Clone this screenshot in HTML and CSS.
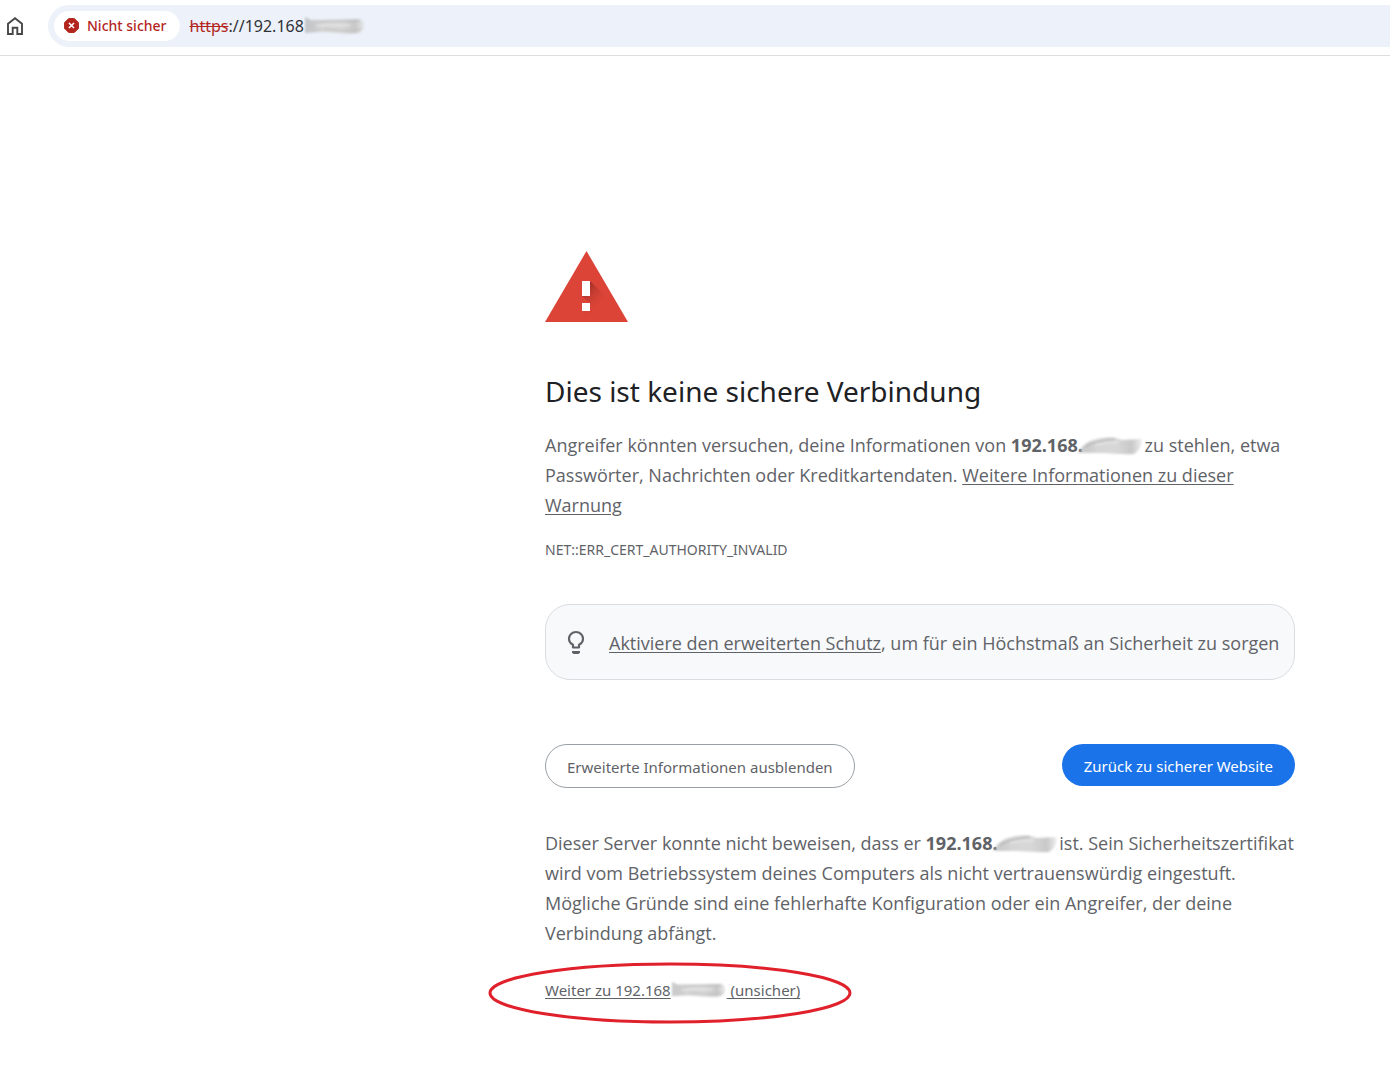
FILE: index.html
```html
<!DOCTYPE html>
<html lang="de">
<head>
<meta charset="utf-8">
<meta name="viewport" content="width=device-width, initial-scale=1">
<title>Datenschutzfehler</title>
<link rel="stylesheet" href="styles.css">
</head>
<body>
<svg width="0" height="0" class="defs" aria-hidden="true">
  <defs>
    <linearGradient id="smudge-fill" x1="0" y1="0" x2="1" y2="0">
      <stop offset="0" stop-color="#aaa" stop-opacity=".6"/>
      <stop offset=".3" stop-color="#d6d6d6"/>
      <stop offset=".6" stop-color="#d8d8d8"/>
      <stop offset=".85" stop-color="#c8c8c8"/>
      <stop offset="1" stop-color="#ddd" stop-opacity=".6"/>
    </linearGradient>
    <filter id="soft" x="-10%" y="-20%" width="120%" height="140%"><feGaussianBlur stdDeviation="1"/></filter>
    <symbol id="smudge-slant" viewBox="0 0 66 20">
      <g filter="url(#soft)">
        <path d="M1 17C5 9 12 4 24 2C36 0 39 2 45 4L64 3C66 9 61 16 57 18C45 19 35 17 23 17Z" fill="url(#smudge-fill)"/>
        <path d="M8 11C16 6 27 4 38 3" fill="none" stroke="#aaa" stroke-width="1"/>
        <path d="M18 9C28 7 34 7 42 6" fill="none" stroke="#eee" stroke-width="1"/>
      </g>
    </symbol>
    <symbol id="smudge-flat" viewBox="0 0 62 20">
      <g filter="url(#soft)">
        <path d="M1 1L7 4L55 3C62 5 62 14 55 17C42 19 28 16 16 16L1 17Z" fill="url(#smudge-fill)"/>
        <path d="M15 6C30 4 45 6 56 5M20 13C34 14 46 16 57 13" fill="none" stroke="#bbb" stroke-width="1"/>
        <path d="M12 10C28 8 36 10 46 9" fill="none" stroke="#eee" stroke-width="1"/>
      </g>
    </symbol>
  </defs>
</svg>

<header class="toolbar">
  <button class="home" type="button" aria-label="Startseite">
    <svg viewBox="0 0 16 18" width="16" height="18"><path d="M1 6.7L8 1.2L15 6.7V17H10.3V10.8H5.7V17H1Z" fill="none" stroke="#474747" stroke-width="1.9"/></svg>
  </button>
  <div class="omnibox">
    <button class="chip" type="button">
      <svg viewBox="0 0 16 16" width="15" height="15"><path d="M5 .5H11L15.500 5V11L11 15.500H5L.5 11V5Z" fill="#b3261e" stroke="#b3261e" stroke-linejoin="round"/><path d="M5.300 5.300L10.700 10.700M10.700 5.300L5.300 10.700" stroke="#fff" stroke-width="1.700"/></svg>
      <span>Nicht sicher</span>
    </button>
    <div class="url"><s>https</s>://192.168<svg class="smudge smudge-url" aria-hidden="true"><use href="#smudge-flat"/></svg></div>
  </div>
</header>

<main class="content">
  <svg class="warning" viewBox="0 0 84 72" role="img" aria-label="Warnung">
    <defs>
      <linearGradient id="shade" gradientUnits="userSpaceOnUse" x1="42" y1="38" x2="58" y2="54"><stop offset="0" stop-color="#a83228"/><stop offset="1" stop-color="#db4437" stop-opacity="0"/></linearGradient>
    </defs>
    <path d="M42.500 0L84 71H1Z" fill="#db4437"/>
    <path d="M46 30L66 50V71H49L38 60H46V52L38 45H46Z" fill="url(#shade)"/>
    <path d="M38 30H46V45H38ZM38 52H46V60H38Z" fill="#fff"/>
  </svg>

  <h1>Dies ist keine sichere Verbindung</h1>
  <p class="text">Angreifer könnten versuchen, deine Informationen von <strong>192.168.</strong><svg class="smudge smudge-wide" aria-hidden="true"><use href="#smudge-slant"/></svg> zu stehlen, etwa Passwörter, Nachrichten oder Kreditkartendaten. <a href="#info">Weitere Informationen zu dieser Warnung</a></p>
  <p class="code">NET::ERR_CERT_AUTHORITY_INVALID</p>

  <div class="tip">
    <svg viewBox="0 0 18 25" width="18" height="25" aria-hidden="true"><path d="M6 17.500V14.800C3.400 13.500 2 11.400 2 8.800C2 5 5 2 9 2S16 5 16 8.800C16 11.400 14.600 13.500 12 14.800V17.500Z" fill="none" stroke="#5f6368" stroke-width="2.200" stroke-linejoin="round"/><path d="M5 21H13V22.500L11.500 24H6.500L5 22.500Z" fill="#5f6368"/></svg>
    <p><a href="#schutz">Aktiviere den erweiterten Schutz</a>, um für ein Höchstmaß an Sicherheit zu sorgen</p>
  </div>

  <div class="actions">
    <button class="secondary" type="button">Erweiterte Informationen ausblenden</button>
    <button class="primary" type="button">Zurück zu sicherer Website</button>
  </div>

  <p class="text">Dieser Server konnte nicht beweisen, dass er <strong>192.168.</strong><svg class="smudge smudge-wide" aria-hidden="true"><use href="#smudge-slant"/></svg> ist. Sein Sicherheitszertifikat wird vom Betriebssystem deines Computers als nicht vertrauenswürdig eingestuft. Mögliche Gründe sind eine fehlerhafte Konfiguration oder ein Angreifer, der deine Verbindung abfängt.</p>
  <div class="proceed">
    <a href="#weiter">Weiter zu 192.168<svg class="smudge smudge-link" aria-hidden="true"><use href="#smudge-flat"/></svg> (unsicher)</a>
    <svg class="ring" viewBox="0 0 364 62" aria-hidden="true"><ellipse cx="182" cy="31" rx="180" ry="29" fill="none" stroke="#e0202b" stroke-width="3"/></svg>
  </div>
</main>
</body>
</html>
```
FILE: styles.css
```css
* { box-sizing: border-box; }
body {
  margin: 0;
  background: #fff;
  color: #5f6368;
  font-family: "Noto Sans", sans-serif;
}
.defs { position: absolute; }
button { font: inherit; cursor: pointer; }
a { color: inherit; text-underline-offset: 2px; }

.toolbar {
  display: flex;
  align-items: center;
  height: 56px;
  padding: 0 0 4px 7px;
  border-bottom: 1px solid #dcdee0;
}
.home {
  display: flex;
  margin-right: 25px;
  padding: 0;
  border: 0;
  background: none;
}
.omnibox {
  display: flex;
  flex: 1;
  align-items: center;
  gap: 10px;
  height: 42px;
  padding-left: 6px;
  border-radius: 21px 0 0 21px;
  background: #ecf1fa;
}
.chip {
  display: flex;
  align-items: center;
  gap: 8px;
  height: 30px;
  padding: 0 13px 0 10px;
  border: 0;
  border-radius: 15px;
  background: #fff;
  color: #b3261e;
  font-size: 14px;
  font-weight: 500;
}
.url { color: #303236; font-size: 16px; white-space: nowrap; }
.url s { color: #b3261e; }

.smudge { height: 20px; vertical-align: -4px; }
.smudge-url { width: 62px; }
.smudge-wide { width: 66px; margin: 0 -3px 0 -6px; }
.smudge-link { width: 56px; }

.content { margin: 195px 95px 48px 545px; }
.warning { display: block; width: 84px; height: 72px; margin-left: -1px; }
h1 {
  margin: 48px 0 19px;
  color: #202124;
  font-size: 28px;
  font-weight: 400;
  line-height: 40px;
}
.text, .tip p {
  margin: 0;
  font-family: "Open Sans", "Noto Sans", sans-serif;
  font-size: 18px;
  line-height: 30px;
}
.code { margin: 20px 0 44px; font-size: 14px; line-height: 20px; }
.tip {
  display: flex;
  align-items: center;
  gap: 24px;
  min-height: 76px;
  padding: 0 12px 0 21px;
  border: 1px solid #dadce0;
  border-radius: 25px;
  background: #f8f9fb;
}
.tip svg { flex: none; }
.tip p { padding-top: 2px; }
.actions {
  display: flex;
  justify-content: space-between;
  align-items: flex-start;
  margin: 64px 0 40px;
}
.secondary, .primary { border-radius: 22px; font-size: 15px; }
.secondary {
  height: 44px;
  padding: 2px 21px 0;
  border: 1px solid #9aa0a6;
  background: #fff;
  color: #5f6368;
}
.primary {
  height: 42px;
  padding: 2px 22px 0;
  border: 0;
  background: #1a73e8;
  color: #fff;
}
.proceed {
  position: relative;
  width: max-content;
  margin-top: 30px;
  font-size: 15px;
  line-height: 24px;
}
.ring {
  position: absolute;
  top: -16px;
  left: -57px;
  width: 364px;
  height: 62px;
  pointer-events: none;
}
```
